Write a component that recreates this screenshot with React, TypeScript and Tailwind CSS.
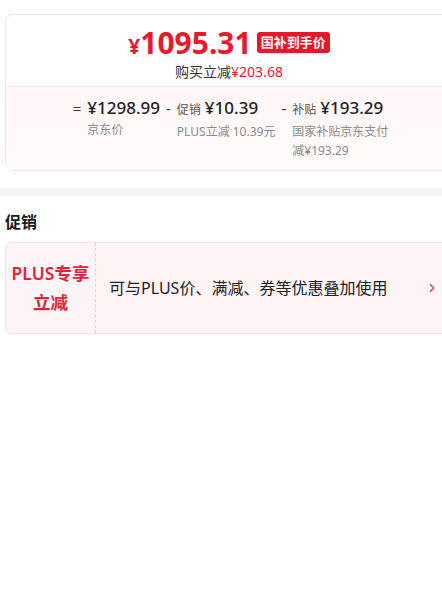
import { ChevronRight } from 'lucide-react';

const font = { fontFamily: '"Noto Sans", "Noto Sans CJK SC", sans-serif' };

function Part({ sign, label, price, note, wrap }: { sign: string; label?: string; price: string; note: string; wrap?: boolean }) {
  return (
    <div className="flex items-start">
      <span className="mr-[6px] text-[15px] leading-[24px] text-[#333]">{sign}</span>
      <div className="flex flex-col">
        <div className="flex items-baseline leading-[24px]">
          {label && <span className="mr-[4px] text-[12px] text-[#555]">{label}</span>}
          <span className="text-[17px] font-medium text-[#222]">{price}</span>
        </div>
        <div className={wrap ? 'max-w-[97px] text-[12px] leading-[19px] text-[#8a8a8a]' : 'whitespace-nowrap text-[12px] leading-[19px] text-[#8a8a8a]'}>
          {note}
        </div>
      </div>
    </div>
  );
}

export default function App() {
  return (
    <div className="w-[442px] overflow-hidden bg-white" style={font}>
      {/* price card */}
      <div className="ml-[5px] mt-[14px] w-[448px] overflow-hidden rounded-lg border border-[#f3e4e7]">
        <div className="pt-[11px] pb-[4px]">
          <div className="flex h-[33px] items-center justify-center leading-none">
            <span className="flex items-baseline font-bold leading-none text-[#e8192c]">
              <span className="text-[21px] leading-none">¥</span>
              <span className="text-[30px] leading-none">1095.31</span>
            </span>
            <span className="ml-[5px] rounded-[3px] bg-[#e8162a] px-[4px] text-[13px] font-bold leading-[21px] text-white">
              国补到手价
            </span>
          </div>
          <div className="mt-[3px] text-center text-[14px] leading-[20px] text-[#333]">
            购买立减<span className="text-[#e8192c]">¥203.68</span>
          </div>
        </div>
        <div className="flex justify-center gap-[6px] border-t border-[#f6e8ea] bg-gradient-to-b from-[#fff6f7] to-[#fffbfb] pt-[9px] pb-[10px] pl-[4px]">
          <Part sign="=" price="¥1298.99" note="京东价" />
          <Part sign="-" label="促销" price="¥10.39" note="PLUS立减 10.39元" />
          <Part sign="-" label="补贴" price="¥193.29" note="国家补贴京东支付减¥193.29" wrap />
        </div>
      </div>

      <div className="mt-[17px] h-[8px] bg-[#f6f6fa]" />

      {/* promotions */}
      <h2 className="ml-[5px] mt-[14px] text-[16px] font-bold leading-[24px] text-[#1a1a1a]">促销</h2>
      <div className="ml-[5px] mt-[8px] flex h-[92px] w-[448px] items-stretch rounded-md border border-[#f1dfe3] bg-[#fdf4f5]">
        <div className="flex w-[90px] shrink-0 flex-col items-center justify-center border-r border-dashed border-[#eccfd5] text-[17.5px] font-semibold leading-[29px] text-[#e2233b]">
          <span>PLUS专享</span>
          <span>立减</span>
        </div>
        <div className="flex flex-1 items-center pl-[13px] pr-[13px]">
          <span className="flex-1 text-[16px] text-[#222]">可与PLUS价、满减、券等优惠叠加使用</span>
          <ChevronRight className="h-[14px] w-[14px] text-[#c2404c]" strokeWidth={2} />
        </div>
      </div>
      <div className="h-[267px]" />
    </div>
  );
}
